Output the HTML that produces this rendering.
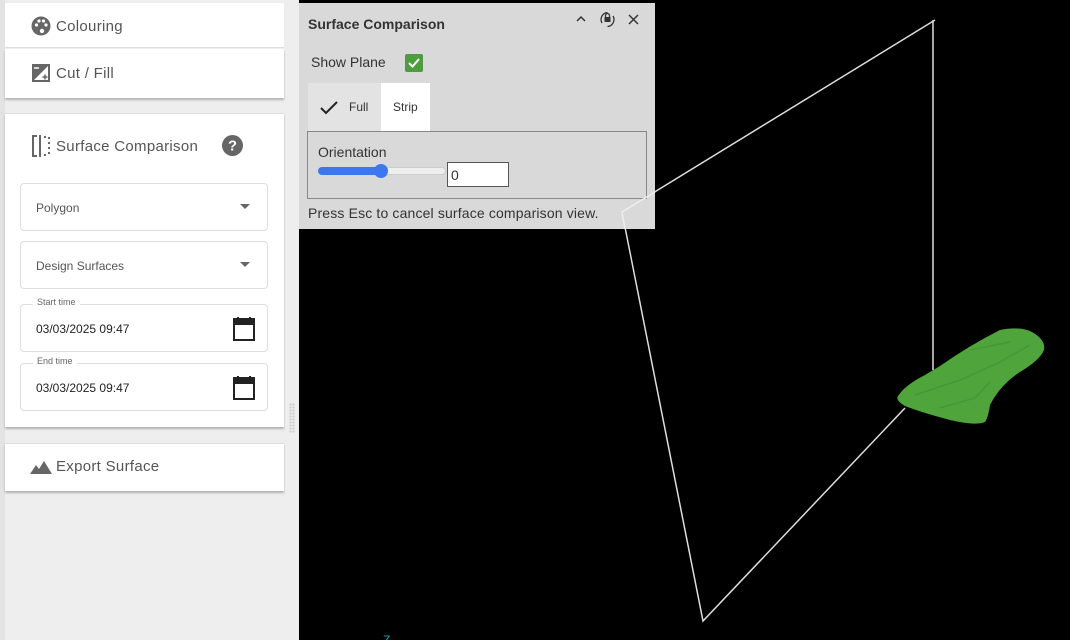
<!DOCTYPE html>
<html><head><meta charset="utf-8"><style>
*{box-sizing:border-box;margin:0;padding:0}
html,body{width:1070px;height:640px;overflow:hidden}
body{background:#eeeeee;font-family:"Liberation Sans",sans-serif;position:relative}
.side{position:absolute;left:0;top:0;width:299px;height:640px;background:#eeeeee}
.card{position:absolute;left:5px;width:279px;background:#fff}
.hdr{display:flex;align-items:center;color:#555;font-size:15px;letter-spacing:.3px}
.field{position:absolute;left:20px;width:248px;border:1px solid #ddd;border-radius:4px;background:#fff;font-size:12px;color:#555}
.vp{position:absolute;left:299px;top:0;width:771px;height:640px;background:#000}
.panel{position:absolute;left:299px;top:3px;width:356px;height:226px;background:#d9d9d9;color:#333}
</style></head><body>
<div class="side">
 <div style="position:absolute;left:0;top:0;width:5px;height:640px;background:#e3e3e3"></div>
 <div class="card" style="top:3px;height:45px;border-bottom:1px solid #ddd">
  <div class="hdr" style="position:absolute;left:26px;top:13px">
   <svg width="20" height="20" viewBox="0 0 20 20"><circle cx="10" cy="10" r="9.5" fill="#666"/><circle cx="5.5" cy="9" r="1.6" fill="#fff"/><circle cx="8" cy="5" r="1.6" fill="#fff"/><circle cx="12.5" cy="5" r="1.6" fill="#fff"/><circle cx="15" cy="9" r="1.6" fill="#fff"/><circle cx="11" cy="15" r="2.2" fill="#fff"/></svg>
   <span style="margin-left:5px">Colouring</span></div>
 </div>
 <div class="card" style="top:49px;height:49px;box-shadow:0 2px 2px rgba(0,0,0,.25)">
  <div class="hdr" style="position:absolute;left:27px;top:15px">
   <svg width="18" height="18" viewBox="0 0 18 18"><rect width="18" height="18" fill="#666"/><path d="M2 16L16 2V16Z" fill="#fff"/><path d="M2 4h5" stroke="#fff" stroke-width="1.5"/><path d="M10.5 13h5M13 10.5v5" stroke="#666" stroke-width="1.5"/></svg>
   <span style="margin-left:6px">Cut / Fill</span></div>
 </div>
 <div class="card" style="top:113px;height:314px;box-shadow:0 2px 2px rgba(0,0,0,.25);border-top:1px solid #ddd">
  <div class="hdr" style="position:absolute;left:27px;top:21px">
   <svg width="19" height="22" viewBox="0 0 19 22"><path d="M5 1H1V21H5" fill="none" stroke="#666" stroke-width="2"/><path d="M8 0V22" stroke="#666" stroke-width="2"/><path d="M12 2h2M12 20h2M17 2v2M17 7v2M17 12v2M17 17v2" stroke="#666" stroke-width="2"/></svg>
   <span style="margin-left:5px">Surface Comparison</span></div>
  <svg style="position:absolute;left:217px;top:21px" width="21" height="21" viewBox="0 0 20 20"><circle cx="10" cy="10" r="10" fill="#666"/><text x="10" y="15" text-anchor="middle" font-size="14" font-weight="bold" fill="#fff" font-family="Liberation Sans">?</text></svg>
 </div>
 <div class="field" style="top:183px;height:48px"><span style="position:absolute;left:15px;top:17px">Polygon</span><span style="position:absolute;right:17px;top:20px;border:5px solid transparent;border-top:5px solid #666"></span></div>
 <div class="field" style="top:241px;height:48px"><span style="position:absolute;left:15px;top:17px">Design Surfaces</span><span style="position:absolute;right:17px;top:20px;border:5px solid transparent;border-top:5px solid #666"></span></div>
 <div class="field" style="top:304px;height:48px"><span style="position:absolute;left:12px;top:-8px;background:#fff;padding:0 4px;font-size:9px;color:#666">Start time</span><span style="position:absolute;left:15px;top:17px;color:#222">03/03/2025 09:47</span>
  <svg style="position:absolute;right:12px;top:12px" width="22" height="24" viewBox="0 0 22 24"><rect x="1" y="2" width="20" height="21" fill="none" stroke="#222" stroke-width="2"/><rect x="1" y="2" width="20" height="6" fill="#222"/><path d="M5 0v4M17 0v4" stroke="#222" stroke-width="2"/></svg></div>
 <div class="field" style="top:363px;height:48px"><span style="position:absolute;left:12px;top:-8px;background:#fff;padding:0 4px;font-size:9px;color:#666">End time</span><span style="position:absolute;left:15px;top:17px;color:#222">03/03/2025 09:47</span>
  <svg style="position:absolute;right:12px;top:12px" width="22" height="24" viewBox="0 0 22 24"><rect x="1" y="2" width="20" height="21" fill="none" stroke="#222" stroke-width="2"/><rect x="1" y="2" width="20" height="6" fill="#222"/><path d="M5 0v4M17 0v4" stroke="#222" stroke-width="2"/></svg></div>
 <div class="card" style="top:443px;height:48px;box-shadow:0 2px 2px rgba(0,0,0,.25);border-top:1px solid #ddd">
  <div class="hdr" style="position:absolute;left:25px;top:14px">
   <svg width="22" height="14" viewBox="0 0 22 14"><path d="M0 14L6 5L9 9L14 1L22 14Z" fill="#666"/></svg>
   <span style="margin-left:4px">Export Surface</span></div>
 </div>
 <div style="position:absolute;left:289px;top:403px;width:6px;height:30px;background-image:radial-gradient(#ccc 1px,transparent 1.2px);background-size:3px 3px"></div>
</div>
<div class="vp">
 <svg width="771" height="640" viewBox="299 0 771 640">
  <path d="M935 20L622 212L703 621L905 408M933 20L933 370" fill="none" stroke="#ddd" stroke-width="1.5"/>
  <path d="M898 396Q905 385 925 375L940 366Q970 345 1000 330Q1020 326 1032 332Q1046 340 1044 350Q1040 360 1020 372Q1000 385 990 405Q988 418 985 422Q975 426 950 420Q920 412 905 406Q895 400 898 396Z" fill="#4fa53c"/>
  <path d="M915 395L960 380L1000 362L1030 345M940 408L975 398L990 382M970 350L1010 342" stroke="#429532" stroke-width="1.5" fill="none" opacity=".8"/>
  <text x="383" y="644" fill="#2aa" font-size="12" font-family="Liberation Sans">Z</text>
 </svg>
</div>
<div class="panel">
 <div style="position:absolute;left:9px;top:13px;font-weight:bold;font-size:14px">Surface Comparison</div>
 <svg style="position:absolute;left:277px;top:12px" width="10" height="8" viewBox="0 0 10 8"><path d="M1 6L5 2L9 6" fill="none" stroke="#333" stroke-width="1.5"/></svg>
 <svg style="position:absolute;left:300px;top:8px" width="17" height="17" viewBox="0 0 17 17"><rect x="5.5" y="6" width="6" height="5" fill="#333"/><path d="M6.5 6V4.5a2 2 0 0 1 4 0V6" fill="none" stroke="#333" stroke-width="1.3"/><path d="M3 12A7 7 0 0 1 8.5 1.5M14 5A7 7 0 0 1 8.5 15.5" fill="none" stroke="#333" stroke-width="1.3"/></svg>
 <svg style="position:absolute;left:329px;top:11px" width="11" height="11" viewBox="0 0 11 11"><path d="M1 1L10 10M10 1L1 10" stroke="#333" stroke-width="1.5"/></svg>
 <div style="position:absolute;left:12px;top:51px;font-size:14px">Show Plane</div>
 <div style="position:absolute;left:106px;top:51px;width:18px;height:18px;background:#4c9e3c;border-radius:2px"><svg width="18" height="18" viewBox="0 0 18 18"><path d="M4 9L7.5 12.5L14 5" fill="none" stroke="#fff" stroke-width="2"/></svg></div>
 <div style="position:absolute;left:9px;top:80px;width:73px;height:48px;background:#e3e3e3"><svg style="position:absolute;left:12px;top:18px" width="18" height="14" viewBox="0 0 18 14"><path d="M1 7L6 12L17 1" fill="none" stroke="#222" stroke-width="2"/></svg><span style="position:absolute;left:41px;top:17px;font-size:12px">Full</span></div>
 <div style="position:absolute;left:82px;top:80px;width:49px;height:48px;background:#fff"><span style="position:absolute;left:12px;top:17px;font-size:12px">Strip</span></div>
 <div style="position:absolute;left:8px;top:128px;width:340px;height:68px;border:1px solid #888">
  <div style="position:absolute;left:10px;top:12px;font-size:14px">Orientation</div>
  <div style="position:absolute;left:10px;top:35px;width:128px;height:8px;border-radius:4px;background:#eee;border:1px solid #ccc"></div>
  <div style="position:absolute;left:10px;top:35px;width:64px;height:8px;border-radius:4px;background:#3b78f0"></div>
  <div style="position:absolute;left:66px;top:32px;width:14px;height:14px;border-radius:50%;background:#3b78f0"></div>
  <div style="position:absolute;left:139px;top:30px;width:62px;height:25px;background:#fff;border:1px solid #555;font-size:14px;padding:4px 3px">0</div>
 </div>
 <div style="position:absolute;left:9px;top:202px;font-size:14px;letter-spacing:.15px">Press Esc to cancel surface comparison view.</div>
</div>
<svg style="position:absolute;left:0;top:0" width="1070" height="640"><path d="M655 192L622 212L625 229" fill="none" stroke="#eee" stroke-width="1.5"/></svg>
</body></html>
